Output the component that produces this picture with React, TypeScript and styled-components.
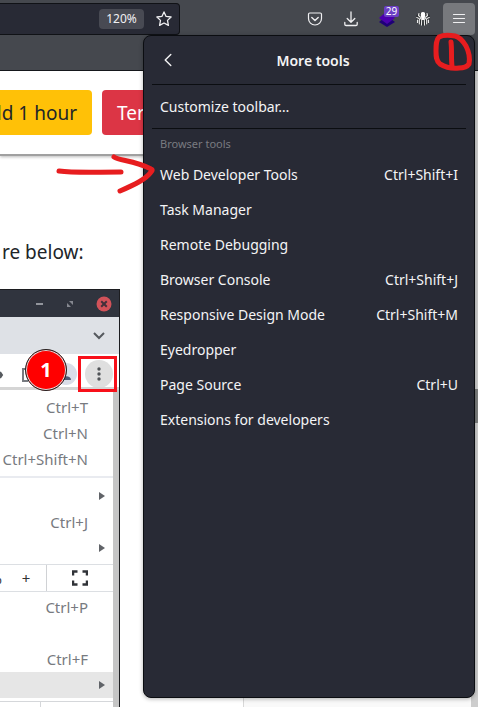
import React from "react";
import styled, { createGlobalStyle } from "styled-components";

const Global = createGlobalStyle`
  *, *::before, *::after { box-sizing: border-box; }
  body { margin: 0; font-family: "Noto Sans", sans-serif; }
  button { font: inherit; color: inherit; background: none; border: 0; padding: 0; }
`;

const Window = styled.div`
  position: relative;
  display: flex;
  flex-direction: column;
  height: 100vh;
  overflow: hidden;
  background: #fff;
`;

const Toolbar = styled.header`
  flex: none;
  display: flex;
  align-items: center;
  justify-content: space-between;
  height: 38px;
  padding-right: 3px;
  background: #45484e;
`;

const AddressBar = styled.div`
  display: flex;
  align-items: center;
  justify-content: flex-end;
  gap: 12px;
  width: 180px;
  height: 32px;
  padding-right: 7px;
  background: #282a35;
  border: 1px solid #101216;
  border-left: 0;
  border-radius: 0 4px 4px 0;
  color: #f0f0f2;
`;

const ZoomLevel = styled.button`
  width: 45px;
  height: 20px;
  border-radius: 4px;
  background: #484a53;
  font-size: 12px;
  line-height: 20px;
`;

const IconButton = styled.button<{ $active?: boolean }>`
  position: relative;
  display: grid;
  place-items: center;
  width: 32px;
  height: 32px;
  border-radius: 4px;
  color: #f0f0f2;
  background: ${(p) => (p.$active ? "#77797d" : "transparent")};
`;

const StarButton = styled.button`
  display: grid;
  color: #f0f0f2;
`;

const Actions = styled.div`
  display: flex;
  gap: 4px;
`;

const Badge = styled.span`
  position: absolute;
  top: 3px;
  right: 4px;
  width: 15px;
  height: 11px;
  border-radius: 2px;
  background: #6b3fc4;
  color: #fff;
  font-size: 10px;
  line-height: 11px;
  text-align: center;
`;

const BookmarksBar = styled.div`
  flex: none;
  height: 33px;
  background: #45484e;
  border-bottom: 1px solid #15171b;
`;

const Viewport = styled.div`
  flex: 1;
  display: flex;
  min-height: 0;
`;

const Main = styled.main`
  flex: none;
  width: 243px;
  overflow: hidden;
  color: #212529;
`;

const Side = styled.aside`
  flex: 1;
  background: #f9f9f9;
  border-left: 1px solid #d8d8d8;
`;

const Scrollbar = styled.div`
  width: 7px;
  padding-top: 318px;
  background: #cdcdcd;
`;

const Thumb = styled.div`
  height: 34px;
  background: #7c7e7e;
`;

const ActionStrip = styled.div`
  display: flex;
  justify-content: flex-end;
  gap: 10px;
  height: 85px;
  padding: 19px 0 0;
  border-bottom: 2px solid #a0a0a0;
  box-shadow: 0 1px 3px #bbb;
`;

const PageButton = styled.button<{ $danger?: boolean }>`
  flex: none;
  width: 141px;
  height: 45px;
  padding: 0 15px;
  border-radius: 4px;
  font-size: 19px;
  text-align: ${(p) => (p.$danger ? "left" : "right")};
  white-space: nowrap;
  color: ${(p) => (p.$danger ? "#fff" : "#212529")};
  background: ${(p) => (p.$danger ? "#dc3545" : "#ffc107")};
`;

const Paragraph = styled.p`
  margin: 82px 0 23px;
  padding-left: 2px;
  font-size: 19px;
  line-height: 28px;
`;

const Figure = styled.figure`
  width: 120px;
  margin: 0;
  border: 1px solid #1c1d20;
  border-width: 1px 1px 0 0;
`;

const TitleBar = styled.div`
  display: flex;
  align-items: center;
  justify-content: flex-end;
  gap: 22px;
  height: 27px;
  padding-right: 7px;
  background: #30343e;
`;

const TabStrip = styled.div`
  display: flex;
  align-items: center;
  justify-content: flex-end;
  height: 37px;
  padding-right: 14px;
  background: #dee1e6;
`;

const MiniToolbar = styled.div`
  position: relative;
  height: 36px;
  background: #fff;
  border-bottom: 3px solid #d5d5d5;
`;

const MiniIcons = styled.svg`
  display: block;
  width: 119px;
  height: 33px;
`;

const Marker = styled.span`
  position: absolute;
  top: -5px;
  left: 25px;
  width: 42px;
  height: 42px;
  border: 1px solid #222;
  border-radius: 50%;
  background: #f00;
  box-shadow: inset 0 0 0 1px #ddd;
  color: #fff;
  font: bold 20px/40px "Open Sans", sans-serif;
  text-align: center;
`;

const Highlight = styled.span`
  position: absolute;
  top: 2px;
  left: 78px;
  width: 39px;
  height: 36px;
  border: 3px solid #f8101a;
`;

const MiniMenu = styled.div`
  padding-top: 4px;
  border-right: 6px solid #c5c5c5;
  background: #fff;
  color: #777a80;
  font-size: 15px;
`;

const MiniRow = styled.div<{ $selected?: boolean }>`
  display: flex;
  align-items: center;
  justify-content: flex-end;
  height: 26px;
  padding-right: 25px;
  white-space: nowrap;
  background: ${(p) => (p.$selected ? "#e6e6e6" : "transparent")};
`;

const SubmenuRow = styled(MiniRow)`
  padding-right: 8px;
`;

const Rule = styled.div`
  height: 2px;
  margin: 4px 0 5px;
  background: #e9ebf0;
`;

const ZoomRow = styled.div`
  display: grid;
  grid-template-columns: 6px 40px 1fr;
  align-items: center;
  height: 28px;
  margin: 3px 0 2px;
  border: 1px solid #dcdfe3;
  border-width: 1px 0;
  color: #333;
`;

const ZoomSign = styled.span`
  justify-self: end;
  padding-right: 4px;
`;

const ZoomPlus = styled.span`
  text-align: center;
`;

const FullscreenCell = styled.div`
  display: grid;
  place-items: center;
  height: 26px;
  border-left: 1px solid #d0d2d5;
`;

const LastRow = styled.div`
  height: 12px;
  margin-top: 3px;
  border-top: 1px solid #d5d7da;
  padding-left: 40px;

  &::before {
    content: "";
    display: block;
    height: 12px;
    border-left: 1px solid #d5d7da;
  }
`;

const Panel = styled.nav`
  position: absolute;
  top: 35px;
  right: 3px;
  bottom: 9px;
  width: 332px;
  padding: 0 8px;
  background: #282a35;
  border: 1px solid #0b0d11;
  border-radius: 8px;
  box-shadow: 0 1px 4px rgba(0, 0, 0, 0.3);
  color: #f4f4f5;
  font-size: 14px;
`;

const PanelHeader = styled.div`
  display: grid;
  grid-template-columns: 32px 1fr 24px;
  align-items: center;
  height: 49px;
  border-bottom: 1px solid #0b0d11;
`;

const BackButton = styled.button`
  display: grid;
  place-items: center;
  height: 32px;
`;

const Title = styled.h1`
  margin: 0;
  font-size: 14px;
  font-weight: 600;
  text-align: center;
`;

const Section = styled.div`
  padding: 4px 0;
  border-bottom: 1px solid #0b0d11;
`;

const GroupLabel = styled.h2`
  margin: 0;
  padding: 0 8px;
  height: 28px;
  color: #797a80;
  font-size: 11px;
  font-weight: 400;
  line-height: 30px;
`;

const MenuItem = styled.button`
  display: flex;
  align-items: center;
  justify-content: space-between;
  width: 100%;
  height: 35px;
  padding: 0 8px;
`;

const Ink = styled.svg`
  position: absolute;
  fill: none;
  stroke: #e71d1f;
  stroke-width: 5;
  stroke-linecap: round;
  stroke-linejoin: round;
  pointer-events: none;
`;

const ArrowInk = styled(Ink)`
  top: 150px;
  right: 318px;
`;

const CircleInk = styled(Ink)`
  top: 30px;
  right: 0;
`;

const items = [
  ["Web Developer Tools", "Ctrl+Shift+I"],
  ["Task Manager", ""],
  ["Remote Debugging", ""],
  ["Browser Console", "Ctrl+Shift+J"],
  ["Responsive Design Mode", "Ctrl+Shift+M"],
  ["Eyedropper", ""],
  ["Page Source", "Ctrl+U"],
  ["Extensions for developers", ""],
];

const stroke = { fill: "none", stroke: "currentColor", strokeLinecap: "round", strokeLinejoin: "round" } as const;

const Triangle = () => (
  <svg width="6" height="10" viewBox="0 0 6 10"><path d="M0 1l6 4-6 4z" fill="#606368" /></svg>
);

export default function App() {
  return (
    <Window>
      <Global />
      <Toolbar>
        <AddressBar>
          <ZoomLevel>120%</ZoomLevel>
          <StarButton aria-label="Bookmark this page">
            <svg width="16" height="16" viewBox="0 0 16 16" {...stroke} strokeWidth="1.3">
              <path d="M8 .9l2.1 4.5 5 .6-3.6 3.4.9 5L8 12l-4.4 2.4.9-5L.9 6l5-.6z" />
            </svg>
          </StarButton>
        </AddressBar>
        <Actions>
          <IconButton aria-label="Save to Pocket">
            <svg width="16" height="16" viewBox="0 0 16 16" {...stroke} strokeWidth="1.2">
              <path d="M2.8 2h10.4c.8 0 1.3.5 1.3 1.3v4.2a6.5 6.5 0 0 1-13 0V3.3C1.5 2.5 2 2 2.8 2z" />
              <path d="M4.8 6.500L8 9.500l3.200-3" strokeWidth="1.4" />
            </svg>
          </IconButton>
          <IconButton aria-label="Downloads">
            <svg width="16" height="16" viewBox="0 0 16 16" {...stroke} strokeWidth="1.3">
              <path d="M8 1v10M4.200 7.500L8 11.200l3.800-3.700M1.800 11.500v1.700c0 .8.500 1.300 1.300 1.300h9.800c.8 0 1.300-.5 1.300-1.300v-1.700" />
            </svg>
          </IconButton>
          <IconButton aria-label="Layers, 29">
            <svg width="18" height="18" viewBox="0 0 18 18">
              <path d="M9 6l8 6-8 5-8-5z" fill="#1f0077" />
              <path d="M9 1l8 7-8 6-8-6z" fill="#4b00ad" />
            </svg>
            <Badge>29</Badge>
          </IconButton>
          <IconButton aria-label="Octopus extension">
            <svg width="16" height="16" viewBox="0 0 16 16">
              <path d="M4 2L1.500 4.500v6L4 14h8l2.500-3.500v-6L12 2z" fill="#282b2e" />
              <path d="M8 1c2.200 0 2.700 2 2 4.500L9.500 9h-3L6 5.500C5.300 3 5.800 1 8 1z" fill="#fff" />
              <g fill="none" stroke="#e9e9e9" strokeWidth="1.200" strokeLinecap="round">
                <path d="M6.800 8L6.500 14M9.200 8l.3 6M6 6.500L4.300 9v4M10 6.500L11.700 9v4" />
                <path d="M5.200 6L3.500 4.500 4 2.500M10.800 6l1.700-1.500-.5-2M4 7.500L1.800 6.500M12 7.500l2.200-1M2.500 9v2.500M13.500 9v2.500" />
              </g>
              <path d="M8 9v6" stroke="#202326" strokeWidth=".8" />
            </svg>
          </IconButton>
          <IconButton $active aria-label="Application menu">
            <svg width="14" height="14" viewBox="0 0 14 14" {...stroke} strokeWidth="1.2">
              <path d="M1.500 2.500h11M1.500 6.500h11M1.500 10.500h11" />
            </svg>
          </IconButton>
        </Actions>
      </Toolbar>
      <BookmarksBar />
      <Viewport>
        <Main>
          <ActionStrip>
            <PageButton>Add 1 hour</PageButton>
            <PageButton $danger>Terminate</PageButton>
          </ActionStrip>
          <Paragraph>re below:</Paragraph>
          <Figure>
            <TitleBar>
              <svg width="8" height="8" viewBox="0 0 8 8"><path d="M0 4h7" stroke="#92959c" strokeWidth="2" /></svg>
              <svg width="8" height="8" viewBox="0 0 8 8" fill="#858890"><path d="M3 1h4v4zM1 3v4h4z" /></svg>
              <svg width="16" height="16" viewBox="0 0 16 16">
                <circle cx="8" cy="8" r="7.5" fill="#d25259" />
                <path d="M5.200 5.200l5.600 5.600M10.800 5.200l-5.600 5.600" stroke="#42303a" strokeWidth="2" />
              </svg>
            </TitleBar>
            <TabStrip>
              <svg width="12" height="8" viewBox="0 0 12 8"><path d="M1 1l5 5 5-5" fill="none" stroke="#55595e" strokeWidth="2" /></svg>
            </TabStrip>
            <MiniToolbar>
              <MiniIcons viewBox="0 0 119 33">
                <path d="M0 21h2M0 18l2 3-2 3" stroke="#55595e" strokeWidth="2" fill="none" />
                <path d="M28 15h-5v12h5" stroke="#777a80" strokeWidth="2" fill="none" />
                <circle cx="66" cy="20" r="11" fill="#d9dde8" />
                <path d="M62 26c0-5 9-5 9 0z" fill="#505a76" />
                <circle cx="99" cy="20" r="14" fill="#dfdfdf" />
                <g fill="#505357"><circle cx="99" cy="15" r="1.7" /><circle cx="99" cy="20" r="1.7" /><circle cx="99" cy="25" r="1.7" /></g>
              </MiniIcons>
              <Highlight />
              <Marker>1</Marker>
            </MiniToolbar>
            <MiniMenu>
              <MiniRow>Ctrl+T</MiniRow>
              <MiniRow>Ctrl+N</MiniRow>
              <MiniRow>Ctrl+Shift+N</MiniRow>
              <Rule />
              <SubmenuRow><Triangle /></SubmenuRow>
              <MiniRow>Ctrl+J</MiniRow>
              <SubmenuRow><Triangle /></SubmenuRow>
              <ZoomRow>
                <ZoomSign>%</ZoomSign>
                <ZoomPlus>+</ZoomPlus>
                <FullscreenCell>
                  <svg width="16" height="16" viewBox="0 0 16 16"><path d="M1 5.500V1.500h4.500M10.500 1.500H15v4M15 10.500v4h-4.500M5.500 14.500H1v-4" fill="none" stroke="#303338" strokeWidth="2.5" /></svg>
                </FullscreenCell>
              </ZoomRow>
              <MiniRow>Ctrl+P</MiniRow>
              <MiniRow />
              <MiniRow>Ctrl+F</MiniRow>
              <SubmenuRow $selected><Triangle /></SubmenuRow>
              <LastRow />
            </MiniMenu>
          </Figure>
        </Main>
        <Side />
        <Scrollbar><Thumb /></Scrollbar>
      </Viewport>
      <Panel aria-label="More tools">
        <PanelHeader>
          <BackButton aria-label="Back">
            <svg width="8" height="14" viewBox="0 0 8 14" {...stroke} strokeWidth="1.4"><path d="M6.800 1.500L1.200 7l5.600 5.500" /></svg>
          </BackButton>
          <Title>More tools</Title>
        </PanelHeader>
        <Section>
          <MenuItem>Customize toolbar…</MenuItem>
        </Section>
        <GroupLabel>Browser tools</GroupLabel>
        {items.map(([label, keys]) => (
          <MenuItem key={label}>
            <span>{label}</span>
            <span>{keys}</span>
          </MenuItem>
        ))}
      </Panel>
      <ArrowInk width="110" height="50" viewBox="50 150 110 50">
        <path d="M59 171c15 2 35 1 62 1M114 157c6 4 20 3 37 12 2 1 1 2 0 3-5 7-15 12-31 19" />
      </ArrowInk>
      <CircleInk width="50" height="45" viewBox="428 30 50 45">
        <path d="M455 36c-6-1-12-1-16 1-3 3-3 8-3 14 0 5 0 10 4 13 5 3 12 5 19 4 4 0 8-1 10-4 1-5 0-12-3-18-3-5-6-9-11-10M451 42c1 8 0 16 1 24" />
      </CircleInk>
    </Window>
  );
}
